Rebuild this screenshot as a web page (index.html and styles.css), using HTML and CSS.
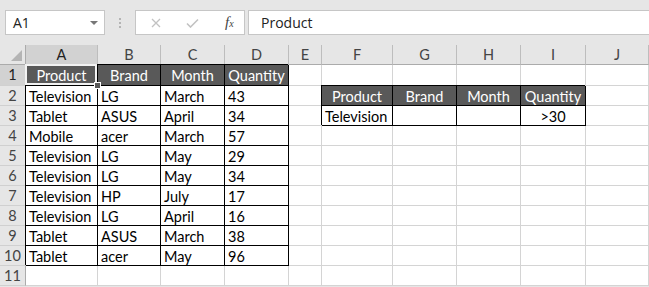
FILE: index.html
```html
<!DOCTYPE html>
<html lang="en">
<head>
    <meta charset="UTF-8">
    <title>Sheet</title>
    <link rel="stylesheet" href="styles.css">
</head>
<body>
    <div class="toolbar">
        <div class="name-box">
            <span>A1</span>
            <span class="drop"></span>
        </div>
        <div class="grip"><i></i><i></i><i></i></div>
        <div class="fx-buttons">
            <svg class="btn-x" width="10" height="10" viewBox="0 0 10 10"><path d="M1 1L9 9M9 1L1 9" stroke="#c2c2c2" stroke-width="1.3" fill="none"/></svg>
            <svg class="btn-ok" width="13" height="10" viewBox="0 0 13 10"><path d="M1 5.5L4.5 9L12 1.5" stroke="#c2c2c2" stroke-width="1.6" fill="none"/></svg>
            <span class="fx">f<small>x</small></span>
        </div>
        <div class="formula">Product</div>
    </div>

    <div class="sheet" id="sheet"></div>

    <script>
        const colNames = ['A', 'B', 'C', 'D', 'E', 'F', 'G', 'H', 'I', 'J'];
        const data = [
            ['Product', 'Brand', 'Month', 'Quantity', '', '', '', '', '', ''],
            ['Television', 'LG', 'March', '43', '', 'Product', 'Brand', 'Month', 'Quantity', ''],
            ['Tablet', 'ASUS', 'April', '34', '', 'Television', '', '', '>30', ''],
            ['Mobile', 'acer', 'March', '57', '', '', '', '', '', ''],
            ['Television', 'LG', 'May', '29', '', '', '', '', '', ''],
            ['Television', 'LG', 'May', '34', '', '', '', '', '', ''],
            ['Television', 'HP', 'July', '17', '', '', '', '', '', ''],
            ['Television', 'LG', 'April', '16', '', '', '', '', '', ''],
            ['Tablet', 'ASUS', 'March', '38', '', '', '', '', '', ''],
            ['Tablet', 'acer', 'May', '96', '', '', '', '', '', ''],
            ['', '', '', '', '', '', '', '', '', '']
        ];

        // table ranges: [firstRow, lastRow, firstCol, lastCol], header is the first row
        const tables = [[1, 10, 0, 3], [2, 3, 5, 8]];

        function tableOf(r, c) {
            return tables.find(t => r >= t[0] && r <= t[1] && c >= t[2] && c <= t[3]);
        }

        const sheet = document.getElementById('sheet');

        const corner = document.createElement('div');
        corner.className = 'corner';
        sheet.appendChild(corner);

        colNames.forEach((name, i) => {
            const head = document.createElement('div');
            head.className = 'col-head' + (i === 0 ? ' selected' : '');
            head.textContent = name;
            sheet.appendChild(head);
        });

        data.forEach((row, r) => {
            const num = r + 1;
            const rowHead = document.createElement('div');
            rowHead.className = 'row-head' + (num === 1 ? ' selected' : '');
            rowHead.textContent = num;
            sheet.appendChild(rowHead);

            row.forEach((value, c) => {
                const cell = document.createElement('div');
                cell.className = 'cell';
                const t = tableOf(num, c);
                if (t) {
                    cell.classList.add('boxed');
                    if (num === t[0]) cell.classList.add('head');
                }
                if (value === '>30') cell.classList.add('center');
                if (num === 1 && c === 0) cell.classList.add('active');
                cell.textContent = value;
                sheet.appendChild(cell);
            });
        });
    </script>
</body>
</html>
```

FILE: styles.css
```css
html, body {
    margin: 0;
    overflow: hidden;
}
body {
    width: 649px;
    height: 287px;
    background: #e6e6e6;
    font-family: Lato, "Liberation Sans", sans-serif;
}

/* formula bar */
.toolbar {
    display: flex;
    align-items: stretch;
    height: 25px;
    padding: 10px 0 10px 5px;
}
.name-box {
    width: 100px;
    background: #fff;
    border: 1px solid #c6c6c6;
    display: flex;
    align-items: center;
    justify-content: space-between;
    padding: 0 6px 0 7px;
    box-sizing: border-box;
    font-family: "Open Sans", sans-serif;
    font-size: 14px;
    color: #222;
}
.name-box .drop {
    width: 0;
    height: 0;
    border-left: 4px solid transparent;
    border-right: 4px solid transparent;
    border-top: 4px solid #777;
}
.grip {
    width: 30px;
    display: flex;
    flex-direction: column;
    align-items: center;
    justify-content: center;
    gap: 2px;
}
.grip i {
    width: 2px;
    height: 2px;
    background: #b4b4b4;
}
.fx-buttons {
    width: 110px;
    box-sizing: border-box;
    background: #fff;
    border: 1px solid #c6c6c6;
    display: flex;
    align-items: center;
    padding-left: 15px;
}
.btn-x { margin-right: 25px; }
.btn-ok { margin-right: 26px; }
.fx {
    font-family: "Liberation Serif", serif;
    font-style: italic;
    font-size: 15px;
    color: #444;
}
.fx small {
    font-size: 10px;
}
.formula {
    flex: 1;
    margin-left: 3px;
    margin-right: -3px;
    background: #fff;
    border: 1px solid #c6c6c6;
    display: flex;
    align-items: center;
    padding-left: 12px;
    font-family: "Open Sans", sans-serif;
    font-size: 14px;
    color: #222;
}

/* grid */
.sheet {
    display: grid;
    grid-template-columns: 26px 72px 63px 64px 64px 33px 71px 64px 64px 65px 63px;
    grid-template-rows: 20px 21px repeat(10, 20px);
    background: #fff;
    font-size: 14.5px;
}
.sheet > div {
    box-sizing: border-box;
    line-height: 19px;
    white-space: nowrap;
    overflow: hidden;
}
.corner {
    background: #e6e6e6;
    border-right: 1px solid #ababab;
    border-bottom: 1px solid #ababab;
    position: relative;
}
.corner::after {
    content: "";
    position: absolute;
    right: 3px;
    bottom: 3px;
    border-left: 11px solid transparent;
    border-bottom: 11px solid #b4b4b4;
}
.col-head {
    background: #e6e6e6;
    border-right: 1px solid #bdbdbd;
    border-bottom: 1px solid #ababab;
    text-align: center;
    color: #444;
}
.row-head {
    background: #e6e6e6;
    border-right: 1px solid #ababab;
    border-bottom: 1px solid #d0d0d0;
    text-align: center;
    color: #444;
}
.col-head.selected,
.row-head.selected {
    background: #d2d2d2;
    color: #222;
}
.cell {
    border-right: 1px solid #d4d4d4;
    border-bottom: 1px solid #d4d4d4;
    padding: 1px 3px 0;
    color: #000;
}
.cell.boxed {
    border-color: #000;
    box-shadow: -1px -1px 0 #000;
}
.cell.head {
    background: #595959;
    color: #fff;
    text-align: center;
}
.cell.center {
    text-align: center;
}
.cell.active {
    position: relative;
    overflow: visible;
}
.cell.active::before {
    content: "";
    position: absolute;
    left: -1px;
    top: -1px;
    right: 0;
    bottom: 0;
    border: 2px solid #f2f2f2;
}
.cell.active::after {
    content: "";
    position: absolute;
    right: -4px;
    bottom: -4px;
    width: 5px;
    height: 5px;
    background: #595959;
    border: 1px solid #fff;
    z-index: 2;
}
```
